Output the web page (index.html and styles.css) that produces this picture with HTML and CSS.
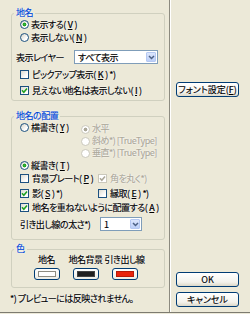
FILE: index.html
```html
<!DOCTYPE html>
<html lang="ja">
<head>
  <meta charset="UTF-8">
  <title>地名の設定</title>
  <link rel="stylesheet" href="styles.css">
</head>
<body>
  <div class="dialog">
    <div class="main">
      <div class="group g-name">
        <div class="group-title">地名</div>
        <label class="opt"><span class="radio on"></span>表示する(<u>V</u>)</label>
        <label class="opt"><span class="radio"></span>表示しない(<u>N</u>)</label>
        <div class="field layer">
          <span class="field-label">表示レイヤー</span>
          <div class="combo wide">
            <span class="combo-val">すべて表示</span>
            <span class="combo-btn"><svg width="7" height="5" viewBox="0 0 7 5"><path d="M1 1l2.5 2.5L6 1" stroke="#4d6185" stroke-width="1.5" fill="none"/></svg></span>
          </div>
        </div>
        <label class="opt chk1"><span class="box"></span>ピックアップ表示(<u>K</u>) *)</label>
        <label class="opt chk2"><span class="box"><svg width="7" height="7" viewBox="0 0 7 7"><path d="M1 3.3l1.8 1.9L6 1.5" stroke="#21a121" stroke-width="1.6" fill="none"/></svg></span>見えない地名は表示しない(<u>I</u>)</label>
      </div>

      <div class="group g-place">
        <div class="group-title">地名の配置</div>
        <div class="dir">
          <label class="opt"><span class="radio"></span>横書き(<u>Y</u>)</label>
          <div class="sub">
            <label class="opt dis"><span class="radio on"></span>水平</label>
            <label class="opt dis"><span class="radio"></span>斜め*) [TrueType]</label>
            <label class="opt dis"><span class="radio"></span>垂直*) [TrueType]</label>
          </div>
        </div>
        <label class="opt vert"><span class="radio on"></span>縦書き(<u>T</u>)</label>
        <div class="pairs">
          <label class="opt"><span class="box"></span>背景プレート(<u>P</u>)</label>
          <label class="opt dis"><span class="box"><svg width="7" height="7" viewBox="0 0 7 7"><path d="M1 3.3l1.8 1.9L6 1.5" stroke="#aca899" stroke-width="1.6" fill="none"/></svg></span>角を丸く*)</label>
          <label class="opt"><span class="box"><svg width="7" height="7" viewBox="0 0 7 7"><path d="M1 3.3l1.8 1.9L6 1.5" stroke="#21a121" stroke-width="1.6" fill="none"/></svg></span>影(<u>S</u>) *)</label>
          <label class="opt"><span class="box"></span>縁取(<u>E</u>) *)</label>
        </div>
        <label class="opt overlap"><span class="box"><svg width="7" height="7" viewBox="0 0 7 7"><path d="M1 3.3l1.8 1.9L6 1.5" stroke="#21a121" stroke-width="1.6" fill="none"/></svg></span>地名を重ねないように配置する(<u>A</u>)</label>
        <div class="field width">
          <span class="field-label">引き出し線の太さ*)</span>
          <div class="combo narrow">
            <span class="combo-val">1</span>
            <span class="combo-btn"><svg width="7" height="5" viewBox="0 0 7 5"><path d="M1 1l2.5 2.5L6 1" stroke="#4d6185" stroke-width="1.5" fill="none"/></svg></span>
          </div>
        </div>
      </div>

      <div class="group g-color">
        <div class="group-title">色</div>
        <div class="swatches">
          <div class="swatch"><span>地名</span><button class="color"><span class="fill white"></span></button></div>
          <div class="swatch"><span>地名背景</span><button class="color"><span class="fill black"></span></button></div>
          <div class="swatch"><span>引き出し線</span><button class="color"><span class="fill red"></span></button></div>
        </div>
      </div>

      <p class="note">*) プレビューには反映されません。</p>
    </div>

    <div class="side">
      <button class="btn">フォント設定(<u>F</u>)</button>
      <button class="btn ok">OK</button>
      <button class="btn">キャンセル</button>
    </div>
  </div>
</body>
</html>
```

FILE: styles.css
```css
body {
  margin: 0;
  width: 250px;
  height: 314px;
  overflow: hidden;
  background-color: #ece9d8;
  font-family: "Noto Sans CJK JP", "Liberation Sans", sans-serif;
  font-size: 9px;
  line-height: 13px;
  letter-spacing: -0.5px;
  font-feature-settings: "palt";
  color: #000;
  -webkit-text-stroke: 0.15px #000;
  text-shadow: 0 0 2px #fff, 0 0 1px #fff;
}
u {
  text-decoration-thickness: 1px;
  text-underline-offset: 1px;
}
.dialog {
  display: flex;
  height: 312px;
  border-bottom: 1px solid #7d7b70;
}
.main {
  width: 170px;
  box-sizing: border-box;
  border-right: 1px solid #8c8a7f;
}
.side {
  width: 80px;
  box-sizing: border-box;
  border-left: 1px solid #fff;
  display: flex;
  flex-direction: column;
  padding: 82px 0 5px 5px;
}

/* groups */
.group {
  margin: 0 4px 0 11px;
  border: 1px solid #d0d0bf;
  border-radius: 3px;
  padding: 0 0 3px 8px;
}
.g-name { margin-top: 13px; }
.g-place { margin-top: 15px; padding-bottom: 8px; }
.g-color { margin-top: 9px; padding-bottom: 7px; }
.group-title {
  display: table;
  margin: -7px 0 -1px -6px;
  padding: 0 2px;
  line-height: 12px;
  background-color: #ece9d8;
  color: #0046d5;
  -webkit-text-stroke-color: #0046d5;
}

/* options */
.opt {
  display: flex;
  align-items: center;
  gap: 2px;
  height: 13px;
  white-space: nowrap;
}
.opt.dis { color: #aca899; -webkit-text-stroke-color: #aca899; }
.radio {
  flex: none;
  width: 9px;
  height: 9px;
  box-sizing: border-box;
  border: 1px solid #1c5180;
  border-radius: 50%;
  background: linear-gradient(135deg, #d6d4c8, #fff 70%);
}
.radio.on {
  background: radial-gradient(circle, #35c035 0, #1f9a1f 1.6px, transparent 2.2px), linear-gradient(135deg, #d6d4c8, #fff 70%);
}
.dis .radio { border-color: #cac8bb; background: #fff; }
.dis .radio.on { background: radial-gradient(circle, #aca899 0 1.6px, transparent 2.2px), #fff; }
.box {
  flex: none;
  width: 9px;
  height: 9px;
  box-sizing: border-box;
  border: 1px solid #1c5180;
  background: linear-gradient(135deg, #dcdad0, #fff 75%);
  display: flex;
  align-items: center;
  justify-content: center;
  margin-right: 1px;
}
.box svg { display: block; }
.dis .box { border-color: #cac8bb; background: #fff; }
.chk1 { margin-top: 4px; }
.chk2 { margin-top: 3px; }

.dir { display: flex; }
.dir > .opt { width: 61px; }
.sub { padding-top: 2px; }
.sub .opt { height: 12px; line-height: 12px; }
.pairs {
  display: grid;
  grid-template-columns: 78px auto;
  row-gap: 2px;
}
.overlap { margin-top: 1px; }

/* combo boxes */
.field {
  display: flex;
  align-items: center;
  height: 14px;
  white-space: nowrap;
}
.layer { margin-top: 6px; }
.layer .field-label { margin-left: -4px; }
.width { margin-top: 3px; }
.combo {
  margin-left: auto;
  height: 14px;
  box-sizing: border-box;
  border: 1px solid #7f9db9;
  background-color: #fff;
  display: flex;
  align-items: center;
  padding: 0 1px 0 3px;
}
.wide { width: 84px; margin-right: 6px; }
.narrow { width: 42px; margin-right: 22px; }
.combo-val { flex: 1; white-space: nowrap; }
.combo-btn {
  width: 10px;
  height: 10px;
  box-sizing: border-box;
  border: 1px solid #b5c8f2;
  border-radius: 1px;
  background: linear-gradient(#dce6fd, #bccff8);
  display: flex;
  align-items: center;
  justify-content: center;
}
.combo-btn svg { display: block; }

/* colour buttons */
.swatches {
  display: flex;
  margin-left: 7px;
}
.swatch {
  width: 39px;
  display: flex;
  flex-direction: column;
  align-items: center;
  line-height: 12px;
  white-space: nowrap;
}
.color {
  margin-top: 2px;
  width: 26px;
  height: 12px;
  box-sizing: border-box;
  border: 1px solid #003c74;
  border-radius: 3px;
  padding: 2px 3px;
  background: linear-gradient(#fff, #eeede5);
  display: flex;
}
.fill {
  flex: 1;
  border: 1px solid #8e8c82;
}
.fill.white { background-color: #fff; }
.fill.black { background-color: #202020; border-color: #444; }
.fill.red { background-color: #e8240c; border-color: #b81a08; }

.note {
  margin: 5px 0 0 10px;
  line-height: 12px;
}

/* buttons */
.btn {
  width: 63px;
  height: 15px;
  padding: 0;
  box-sizing: border-box;
  border: 1px solid #003c74;
  border-radius: 3px;
  background: linear-gradient(#fff, #f3f2ec 70%, #dcd8c8);
  font-family: inherit;
  font-size: 9px;
  line-height: 13px;
  letter-spacing: 0;
  font-feature-settings: "palt";
  white-space: nowrap;
  color: #000;
  -webkit-text-stroke: 0.15px #000;
  text-shadow: inherit;
}
.btn.ok { margin-top: auto; margin-bottom: 5px; }
```
